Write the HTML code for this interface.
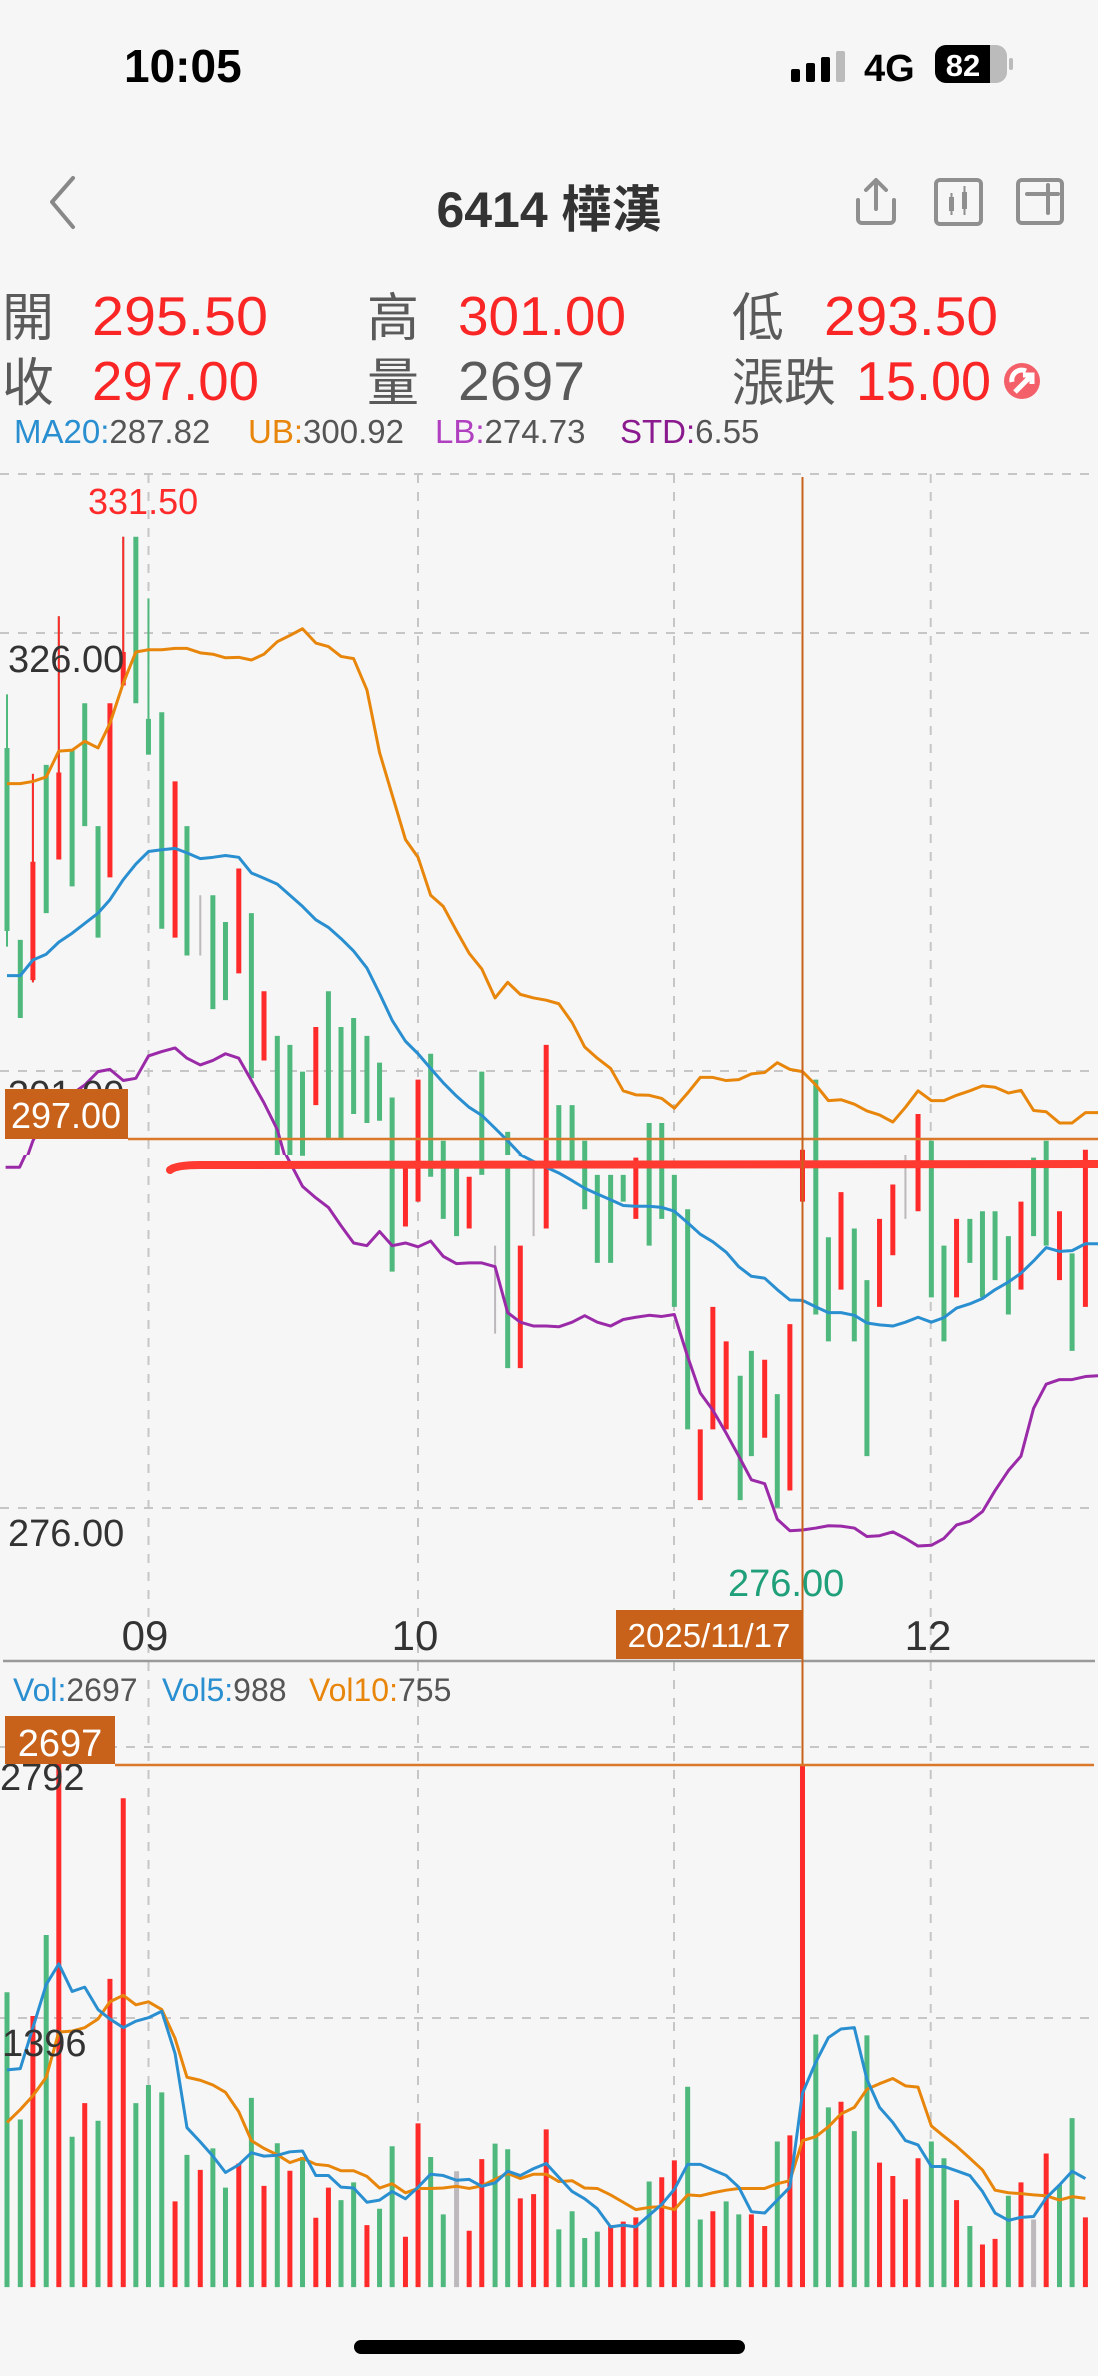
<!DOCTYPE html>
<html><head><meta charset="utf-8">
<style>
html,body{margin:0;padding:0;background:#f6f6f6;}
svg{display:block}
.c path{vector-effect:non-scaling-stroke;fill:none}
.g{stroke:#4fb97d}.r{stroke:#ff2b2b}.n{stroke:#bdb8bb}
.b{stroke-width:5}.w{stroke-width:2}
.ln{stroke-width:3;stroke-linejoin:round;fill:none}
text{font-family:"Liberation Sans","Noto Sans CJK TC",sans-serif}
</style></head><body>
<svg width="1098" height="2376" viewBox="0 0 1098 2376" xmlns="http://www.w3.org/2000/svg">
<defs>
<clipPath id="c2"><rect x="0" y="460" width="1098" height="695"/></clipPath>
<clipPath id="c3"><rect x="0" y="1155" width="1098" height="506"/></clipPath>
</defs>
<rect width="1098" height="2376" fill="#f6f6f6"/>

<!-- status bar -->
<text x="124" y="82" font-size="46" font-weight="bold" fill="#000">10:05</text>
<rect x="791" y="69" width="9" height="13" rx="2" fill="#000"/>
<rect x="806" y="63" width="9" height="19" rx="2" fill="#000"/>
<rect x="821" y="57" width="9" height="25" rx="2" fill="#000"/>
<rect x="836" y="51" width="9" height="31" rx="2" fill="#bbb"/>
<text x="864" y="81" font-size="38" font-weight="bold" fill="#000">4G</text>
<rect x="935" y="45" width="72" height="38" rx="11" fill="#bbb"/>
<path d="M946 45 H990 V83 H946 A11 11 0 0 1 935 72 V56 A11 11 0 0 1 946 45Z" fill="#000"/>
<rect x="1009" y="58" width="4" height="12" rx="2" fill="#bbb"/>
<text x="963" y="76" font-size="31" font-weight="bold" fill="#fff" text-anchor="middle">82</text>

<!-- header -->
<path d="M73 178 L52 202 L73 227" stroke="#888" stroke-width="4" fill="none" stroke-linecap="round" stroke-linejoin="round"/>
<text x="549" y="227" font-size="50" font-weight="bold" fill="#333" text-anchor="middle">6414 樺漢</text>
<g stroke="#8f8f8f" stroke-width="4" fill="none" stroke-linecap="round" stroke-linejoin="round">
<path d="M858 200 V219 a4 4 0 0 0 4 4 H890 a4 4 0 0 0 4 -4 V200"/>
<path d="M876 181 V209 M866 190 L876 180 L886 190"/>
<rect x="936" y="180" width="45" height="44" rx="4"/>
<rect x="1018" y="180" width="44" height="43" rx="4"/>
<path d="M1027 194 H1058 M1048 185 V213"/>
</g>
<g fill="#8f8f8f">
<rect x="949" y="197" width="5" height="14"/><rect x="950.5" y="193" width="2" height="22"/>
<rect x="962" y="192" width="5" height="17"/><rect x="963.5" y="186" width="2" height="29"/>
</g>

<!-- info rows -->
<g font-size="52" fill="#5a5a5a">
<text x="2" y="336">開</text><text x="367" y="336">高</text><text x="732" y="336">低</text>
<text x="2" y="401">收</text><text x="367" y="401">量</text><text x="732" y="401">漲跌</text>
</g>
<g font-size="55" fill="#fa2525">
<text x="92" y="335" textLength="176" lengthAdjust="spacingAndGlyphs">295.50</text>
<text x="458" y="335" textLength="168" lengthAdjust="spacingAndGlyphs">301.00</text>
<text x="824" y="335" textLength="174" lengthAdjust="spacingAndGlyphs">293.50</text>
<text x="92" y="400" textLength="167" lengthAdjust="spacingAndGlyphs">297.00</text>
<text x="856" y="400" textLength="135" lengthAdjust="spacingAndGlyphs">15.00</text>
</g>
<text x="458" y="400" font-size="55" fill="#5a5a5a" textLength="127" lengthAdjust="spacingAndGlyphs">2697</text>
<circle cx="1022" cy="381" r="18" fill="#f4606a"/>
<path d="M1012 382 A10 10 0 0 1 1026 371 M1015 392 L1031 376 M1023 375 H1032 V384" stroke="#fff" stroke-width="5" fill="none"/>

<text y="443" font-size="33">
<tspan x="14" fill="#2a8fd0">MA20:</tspan><tspan fill="#555">287.82</tspan>
<tspan x="248" fill="#e8860c">UB:</tspan><tspan fill="#555">300.92</tspan>
<tspan x="435" fill="#b040c0">LB:</tspan><tspan fill="#555">274.73</tspan>
<tspan x="620" fill="#8a1a8e">STD:</tspan><tspan fill="#555">6.55</tspan>
</text>

<!-- grid -->
<g stroke="#c6c6c6" stroke-width="2" stroke-dasharray="9 9">
<path d="M0 474 H1098 M0 633 H1098 M0 1071 H1098 M0 1508 H1098 M0 1747 H1098 M0 2018 H1098"/>
<path d="M148.5 474 V2287 M418 474 V2287 M674 474 V2287 M930.7 474 V2287"/>
</g>

<!-- price candles part 1 -->
<g clip-path="url(#c2)"><g class="c" transform="matrix(0.70026 0 0 0.44643 0 460)">
<path class="g w" d="M10 525V1090M84 350V895M176 172V505M212 310V660M47 703V1170"/>
<path class="r w" d="M84 350V895M176 172V505M47 703V1170"/>
<path class="g b" d="M10 645V1055M29 1075V1250M66 683V1015M103 650V955M121 545V820M140 820V1070M194 172V545M212 580V660M231 565V1050M267 820V1110M304 975V1230M322 1035V1210M359 1015V1385M396 1290V1600M414 1310V1600M432 1370V1600M469 1190V1520M487 1270V1520M505 1250V1465M524 1290V1485M542 1350V1480M560 1428V1600M615 1330V1600M633 1525V1600M688 1370V1600M725 1505V1600M798 1445V1600M817 1445V1600M835 1525V1600M927 1485V1600M945 1485V1600M1165 1388V1600M1330 1525V1600M1494 1525V1600"/>
<path class="r b" d="M47 900V1165M84 700V895M157 545V935M176 430V505M250 720V1070M341 915V1150M377 1190V1345M451 1270V1445M597 1388V1600M780 1310V1600M1146 1545V1600M1311 1465V1600M1550 1545V1600"/>
<path class="n w" d="M286 975V1110"/>
<path class="ln" stroke="#e8860c" d="M10 725L29 725L47 720L66 710L84 652L103 650L121 630L140 645L157 590L176 500L194 430L212 425L231 425L250 422L267 422L286 432L304 435L322 443L341 442L359 448L377 435L396 407L414 393L432 378L451 410L469 418L487 440L505 445L524 515L542 655L560 750L579 850L597 890L615 975L633 1000L652 1055L670 1105L688 1140L707 1205L725 1170L743 1197L762 1205L780 1210L798 1218L817 1260L835 1315L853 1340L872 1363L890 1413L908 1422L927 1423L945 1430L963 1452L982 1418L1000 1383L1018 1383L1037 1390L1055 1388L1073 1375L1092 1372L1110 1350L1128 1365L1146 1370L1165 1400L1183 1435L1201 1433L1220 1443L1238 1458L1256 1467L1275 1483L1293 1450L1311 1413L1330 1435L1348 1435L1366 1423L1385 1413L1403 1402L1421 1405L1440 1418L1458 1412L1476 1457L1494 1460L1513 1485L1531 1485L1550 1462L1568 1462"/>
<path class="ln" stroke="#2a8fd0" d="M10 1155L29 1155L47 1120L66 1107L84 1080L103 1060L121 1038L140 1015L157 985L176 940L194 905L212 877L231 873L250 870L267 880L286 893L304 890L322 886L341 890L359 925L377 937L396 950L414 975L432 1000L451 1030L469 1047L487 1072L505 1100L524 1138L542 1195L560 1255L579 1302L597 1330L615 1363L633 1395L652 1425L670 1450L688 1468L707 1497L725 1525L743 1555L760 1590"/>
<path class="ln" stroke="#9a2aa8" d="M30 1600L47 1525L66 1470L84 1440L103 1420L121 1400L140 1370L157 1365L176 1390L194 1385L212 1335L231 1325L250 1317L267 1340L286 1355L304 1345L322 1330L341 1340L359 1390L377 1440L396 1500L414 1600"/>
</g></g>

<!-- price candles part 2 -->
<g clip-path="url(#c3)"><g class="c" transform="matrix(0.70026 0 0 0.38265 0 1150)">
<path class="g b" d="M432 -20V15M560 -20V318M615 -20V70M633 -20V180M652 40V225M688 -20V65M725 40V570M798 -20V40M817 -20V40M835 -20V155M853 65V295M872 65V295M890 65V135M927 -20V250M945 -20V180M963 65V410M982 155V730M1057 590V915M1073 525V800M1110 638V935M1165 -20V430M1183 228V500M1220 205V500M1238 340V800M1330 -20V385M1348 250V500M1385 180V295M1403 160V385M1421 160V340M1440 225V430M1476 20V225M1494 -20V250M1531 270V525"/>
<path class="r b" d="M579 40V200M597 -20V135M670 70V205M743 250V570M780 -20V205M908 20V180M1000 730V915M1018 410V730M1037 500V730M1092 548V752M1128 455V890M1146 -20V135M1201 110V365M1256 180V410M1275 90V275M1311 -20V160M1366 180V385M1458 135V365M1513 160V340M1550 -20V410"/>
<path class="n w" d="M707 250V480M762 40V225M1293 -20V180"/>
<path class="ln" stroke="#2a8fd0" d="M725 -5L762 30L780 45L798 60L817 80L835 100L853 115L872 130L890 145L908 147L927 147L945 150L963 160L982 190L1000 220L1018 240L1037 267L1055 305L1073 330L1092 335L1110 365L1128 392L1146 393L1165 410L1183 425L1201 425L1220 432L1238 452L1256 457L1275 460L1293 450L1311 437L1330 450L1348 438L1366 413L1385 402L1403 388L1421 365L1440 345L1458 322L1476 290L1494 255L1513 265L1531 263L1550 245L1568 245"/>
<path class="ln" stroke="#9a2aa8" d="M8 45L28 45L42 -10M402 -10L432 95L451 125L469 150L487 198L505 243L524 250L542 213L560 250L579 243L597 253L615 238L633 278L652 297L670 295L688 295L707 305L725 425L743 450L762 460L780 460L798 462L817 450L835 433L853 450L872 460L890 443L908 437L927 432L945 435L963 430L982 540L1000 635L1018 680L1037 740L1055 800L1073 862L1092 872L1110 965L1128 995L1146 993L1165 988L1183 982L1201 983L1220 988L1238 1010L1256 1008L1275 998L1293 1015L1311 1035L1330 1033L1348 1015L1366 980L1385 970L1403 945L1421 890L1440 838L1458 800L1476 675L1494 612L1513 600L1531 600L1550 592L1568 590"/>
</g></g>

<!-- hand drawn red line -->
<path d="M170 1170 Q176 1165 200 1165 L1098 1164" stroke="#ff3a30" stroke-width="8" fill="none" stroke-linecap="round"/>

<!-- price labels -->
<text x="88" y="514" font-size="36" fill="#ff2b2b">331.50</text>
<text x="8" y="672" font-size="38" fill="#333">326.00</text>
<text x="8" y="1107" font-size="38" fill="#333">301.00</text>
<path d="M128 1139 H1098" stroke="#d9782a" stroke-width="2.5"/>
<rect x="5" y="1089" width="123" height="50" fill="#c8621a"/>
<text x="66" y="1128" font-size="36" fill="#fff" text-anchor="middle">297.00</text>
<text x="8" y="1546" font-size="38" fill="#333">276.00</text>
<text x="728" y="1596" font-size="38" fill="#20a07a">276.00</text>
<text x="145" y="1650" font-size="42" fill="#333" text-anchor="middle">09</text>
<text x="415" y="1650" font-size="42" fill="#333" text-anchor="middle">10</text>
<text x="928" y="1650" font-size="42" fill="#333" text-anchor="middle">12</text>
<path d="M3 1661 H1095" stroke="#9a9a9a" stroke-width="2.5"/>
<path d="M802.5 477 V2287" stroke="#c8621a" stroke-width="2"/>
<rect x="616" y="1610" width="186" height="49" fill="#c8621a"/>
<text x="709" y="1647" font-size="33" fill="#fff" text-anchor="middle">2025/11/17</text>

<!-- vol legend -->
<text y="1701" font-size="32">
<tspan x="13" fill="#2a8fd0">Vol:</tspan><tspan fill="#555">2697</tspan>
<tspan x="162" fill="#2a8fd0">Vol5:</tspan><tspan fill="#555">988</tspan>
<tspan x="309" fill="#e8860c">Vol10:</tspan><tspan fill="#555">755</tspan>
</text>

<!-- volume -->
<g class="c" transform="matrix(0.70026 0 0 0.43112 0 1700)">
<path class="g b" d="M10 1362V678M29 1362V973M66 1362V545M103 1362V1013M140 1362V976M194 1362V935M212 1362V893M231 1362V910M267 1362V1055M304 1362V1040M322 1362V1131M359 1362V923M396 1362V1028M432 1362V1060M487 1362V1160M505 1362V1119M542 1362V1180M560 1362V1035M615 1362V1060M633 1362V1193M707 1362V1029M725 1362V1042M798 1362V1228M817 1362V1186M835 1362V1248M853 1362V1233M927 1362V1117M982 1362V897M1000 1362V1205M1037 1362V1163M1055 1362V1193M1110 1362V1024M1165 1362V776M1183 1362V945M1220 1362V1000M1238 1362V778M1330 1362V1024M1348 1362V1063M1385 1362V1220M1440 1362V1150M1513 1362V1125M1531 1362V970"/>
<path class="r b" d="M47 1362V733M84 1362V140M121 1362V935M157 1362V647M176 1362V228M250 1362V1163M286 1362V1090M341 1362V1075M377 1362V1127M414 1362V1092M451 1362V1201M469 1362V1131M524 1362V1218M579 1362V1245M597 1362V982M670 1362V1231M688 1362V1065M743 1362V1156M762 1362V1146M780 1362V996M872 1362V1218M890 1362V1210M908 1362V1200M945 1362V1107M963 1362V1068M1018 1362V1186M1073 1362V1193M1092 1362V1220M1128 1362V1010M1146 1362V150M1201 1362V932M1256 1362V1073M1275 1362V1104M1293 1362V1158M1311 1362V1063M1366 1362V1160M1403 1362V1263M1421 1362V1250M1458 1362V1119M1494 1362V1052M1550 1362V1200"/>
<path class="n b" d="M652 1362V1093M1476 1362V1205"/>
<path class="ln" stroke="#e8860c" d="M10 980L29 950L47 918L66 875L84 770L103 768L121 760L140 740L157 700L176 685L194 707L212 700L231 718L250 785L267 875L286 882L304 893L322 910L341 955L359 1022L377 1040L396 1055L414 1073L432 1063L451 1077L469 1080L487 1092L505 1092L524 1105L542 1132L560 1122L579 1143L597 1133L615 1133L633 1132L652 1128L670 1133L688 1127L707 1112L725 1098L743 1110L762 1100L780 1100L798 1117L817 1115L835 1132L853 1133L872 1148L890 1165L908 1182L927 1177L945 1175L963 1182L982 1148L1000 1150L1018 1143L1037 1137L1055 1133L1073 1133L1092 1133L1110 1122L1128 1115L1146 1022L1165 1013L1183 990L1201 960L1220 945L1238 903L1256 890L1275 878L1293 895L1311 898L1330 988L1348 1012L1366 1035L1385 1063L1403 1090L1421 1137L1440 1143L1458 1145L1476 1148L1494 1150L1513 1160L1531 1152L1550 1156"/>
<path class="ln" stroke="#2a8fd0" d="M10 858L29 855L47 760L66 660L84 612L103 676L121 666L140 718L157 740L176 760L194 745L212 737L231 722L250 820L267 992L286 1025L304 1058L322 1096L341 1078L359 1050L377 1058L396 1056L414 1048L432 1046L451 1103L469 1103L487 1130L505 1132L524 1165L542 1160L560 1140L579 1157L597 1130L615 1100L633 1103L652 1114L670 1112L688 1128L707 1120L725 1093L743 1103L762 1087L780 1075L798 1107L817 1140L835 1157L853 1180L872 1222L890 1218L908 1222L927 1195L945 1170L963 1135L982 1077L1000 1077L1018 1090L1037 1103L1055 1130L1073 1187L1092 1190L1110 1160L1128 1130L1146 912L1165 840L1183 783L1201 763L1220 760L1238 880L1256 945L1275 980L1293 1022L1311 1032L1330 1082L1348 1082L1366 1092L1385 1103L1403 1140L1421 1190L1440 1207L1458 1200L1476 1198L1494 1155L1513 1125L1531 1093L1550 1110"/>
</g>

<text x="0" y="1790" font-size="38" fill="#333">2792</text>
<path d="M115 1765 H1094" stroke="#d9782a" stroke-width="2.5"/>
<rect x="5" y="1716" width="110" height="48" fill="#c8621a"/>
<text x="60" y="1756" font-size="38" fill="#fff" text-anchor="middle">2697</text>
<text x="2" y="2056" font-size="38" fill="#333">1396</text>

<rect x="354" y="2340" width="391" height="14" rx="7" fill="#000"/>
</svg>
</body></html>
